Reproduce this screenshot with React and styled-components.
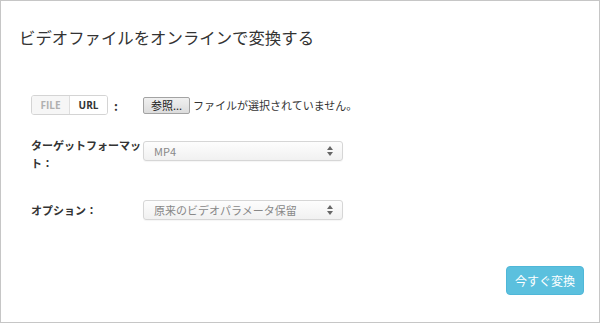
import React from "react";
import styled, { createGlobalStyle } from "styled-components";

const Global = createGlobalStyle`
  html, body { margin: 0; padding: 0; background: #fff; }
  body { font-family: "Noto Sans CJK JP", "Open Sans", sans-serif; }
`;

function Arrows() {
  return (
    <svg width="6" height="10" viewBox="0 0 6 10">
      <path d="M3 0 L6 4 L0 4 Z" fill="#666" />
      <path d="M0 6 L6 6 L3 10 Z" fill="#666" />
    </svg>
  );
}

function Select({ value, mt }) {
  return (
    <SelectBox $mt={mt}>
      <span>{value}</span>
      <Arrows />
    </SelectBox>
  );
}

export default function App() {
  return (
    <Frame>
      <Global />
      <Title>ビデオファイルをオンラインで変換する</Title>
      <Form>
        <Row $mt={46}>
          <Toggle>
            <Segment>FILE</Segment>
            <Segment $active>URL</Segment>
          </Toggle>
          <Colon>:</Colon>
          <FileButton>参照...</FileButton>
          <FileText>ファイルが選択されていません。</FileText>
        </Row>
        <Row $mt={21} $top>
          <Label>
            ターゲットフォーマッ
            <br />
            ト：
          </Label>
          <Select value="MP4" mt={5} />
        </Row>
        <Row $mt={28}>
          <Label>オプション：</Label>
          <Select value="原来のビデオパラメータ保留" />
        </Row>
      </Form>
      <Convert>今すぐ変換</Convert>
    </Frame>
  );
}

const Frame = styled.div`
  box-sizing: border-box;
  width: 600px;
  height: 323px;
  border: 1px solid #c6c6c6;
  display: flex;
  flex-direction: column;
`;

const Title = styled.h1`
  margin: 24px 0 0 18px;
  font-size: 16.4px;
  line-height: 24px;
  font-weight: 400;
  color: #333;
`;

const Form = styled.div`
  display: flex;
  flex-direction: column;
  padding-left: 30px;
`;

const Row = styled.div`
  display: flex;
  align-items: ${(p) => (p.$top ? "flex-start" : "center")};
  margin-top: ${(p) => p.$mt}px;
`;

const Toggle = styled.div`
  display: flex;
  border: 1px solid #d4d4d4;
  border-radius: 3px;
  height: 18px;
  overflow: hidden;
`;

const Segment = styled.div`
  width: 37px;
  display: flex;
  align-items: center;
  justify-content: center;
  font-family: "Open Sans", sans-serif;
  font-size: 10px;
  font-weight: 700;
  color: ${(p) => (p.$active ? "#333" : "#b0b0b0")};
  background: ${(p) => (p.$active ? "#fff" : "#f6f6f6")};
  & + & { border-left: 1px solid #dedede; }
`;

const Colon = styled.span`
  margin-left: 6px;
  width: 29px;
  font-size: 12px;
  font-weight: 700;
  color: #333;
`;

const FileButton = styled.div`
  box-sizing: border-box;
  width: 47px;
  height: 17px;
  display: flex;
  align-items: center;
  justify-content: center;
  border: 1px solid #a3a3a3;
  border-radius: 2px;
  background: linear-gradient(#f0f0f0, #dcdcdc);
  font-size: 11px;
  color: #222;
`;

const FileText = styled.span`
  margin-left: 3px;
  font-size: 11px;
  color: #333;
`;

const Label = styled.div`
  width: 111px;
  margin-right: 1px;
  font-size: 11px;
  line-height: 18px;
  font-weight: 700;
  color: #333;
  white-space: nowrap;
`;

const SelectBox = styled.div`
  box-sizing: border-box;
  width: 200px;
  height: 20px;
  margin-top: ${(p) => p.$mt || 0}px;
  padding: 0 9px 0 10px;
  display: flex;
  align-items: center;
  justify-content: space-between;
  border: 1px solid #d6d6d6;
  border-radius: 3px;
  background: linear-gradient(#fdfdfd, #f1f1f1);
  box-shadow: 0 1px 1px rgba(0, 0, 0, 0.04);
  font-size: 11px;
  color: #888;
`;

const Convert = styled.div`
  align-self: flex-end;
  margin: auto 15px 27px 0;
  box-sizing: border-box;
  width: 78px;
  height: 29px;
  display: flex;
  align-items: center;
  justify-content: center;
  background: #5bc0de;
  border: 1px solid #4fb7d8;
  border-radius: 4px;
  color: #fff;
  font-size: 12px;
`;
